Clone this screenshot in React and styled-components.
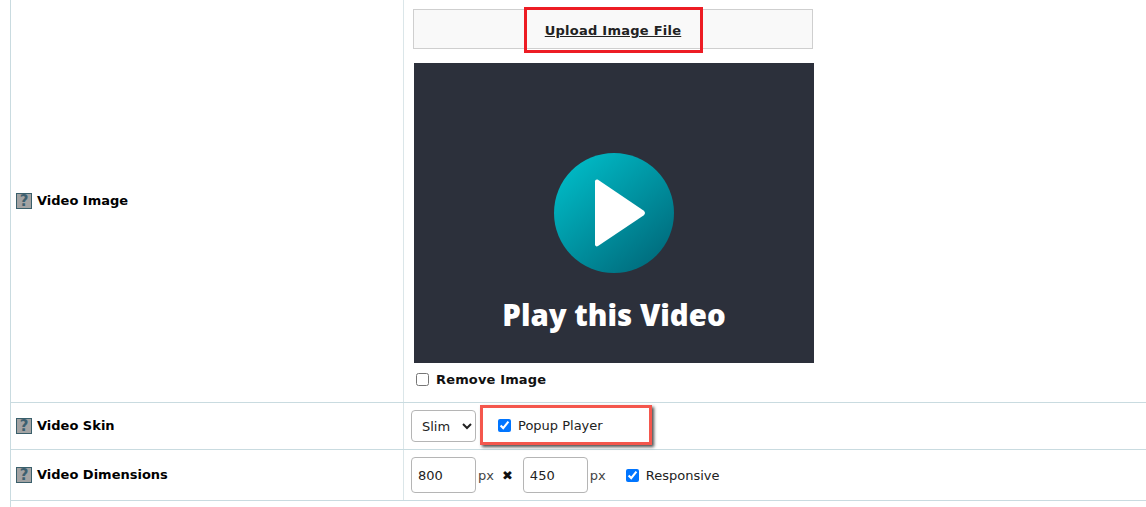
import React from "react";
import styled, { createGlobalStyle } from "styled-components";

const GlobalStyle = createGlobalStyle`
  html, body {
    margin: 0;
    padding: 0;
    background: #fff;
    overflow: hidden;
  }
  body {
    font-family: "DejaVu Sans", Verdana, sans-serif;
    font-size: 13px;
    color: #222;
  }
`;

const HelpIcon = () => (
  <HelpBox>?</HelpBox>
);

const PlayIcon = () => (
  <svg width="120" height="120" viewBox="0 0 120 120">
    <defs>
      <linearGradient id="playGrad" x1="0.15" y1="0.1" x2="0.85" y2="0.9">
        <stop offset="0" stopColor="#00b8c4" />
        <stop offset="1" stopColor="#006d7e" />
      </linearGradient>
    </defs>
    <circle cx="60" cy="60" r="60" fill="url(#playGrad)" />
    <path
      d="M41 28.5 C41 27 42.5 25.8 44 26.8 L89.5 57.5 C91.5 59 91.5 61 89.5 62.5 L44 93 C42.5 94 41 93 41 91.5 Z"
      fill="#fff"
    />
  </svg>
);

const App = () => {
  return (
    <>
      <GlobalStyle />
      <Table>
        <Row $height={403}>
          <Label>
            <HelpIcon />
            Video Image
          </Label>
          <Value>
            <ImageColumn>
              <UploadBox>
                <UploadLink href="#">Upload Image File</UploadLink>
                <RedMark />
              </UploadBox>
              <Poster>
                <PlayIcon />
                <PosterTitle>Play this Video</PosterTitle>
              </Poster>
              <RemoveRow>
                <Check type="checkbox" />
                Remove Image
              </RemoveRow>
            </ImageColumn>
          </Value>
        </Row>
        <Row $height={47}>
          <Label>
            <HelpIcon />
            Video Skin
          </Label>
          <Value>
            <Controls>
              <Select defaultValue="Slim">
                <option>Slim</option>
              </Select>
              <PopupBox>
                <Check type="checkbox" defaultChecked />
                <PlainLabel>Popup Player</PlainLabel>
              </PopupBox>
            </Controls>
          </Value>
        </Row>
        <Row $height={51}>
          <Label>
            <HelpIcon />
            Video Dimensions
          </Label>
          <Value>
            <Controls>
              <NumberInput defaultValue="800" />
              <Unit>px</Unit>
              <Times>✖</Times>
              <NumberInput defaultValue="450" />
              <Unit>px</Unit>
              <ResponsiveBox>
                <Check type="checkbox" defaultChecked />
                <PlainLabel>Responsive</PlainLabel>
              </ResponsiveBox>
            </Controls>
          </Value>
        </Row>
        <Row $height={10} />
      </Table>
    </>
  );
};

export default App;

const Table = styled.div`
  margin-left: 10px;
  border-left: 1px solid #c9dbe0;
  height: 507px;
  overflow: hidden;
`;
const Row = styled.div`
  display: grid;
  grid-template-columns: 393px 1fr;
  height: ${(p) => p.$height}px;
  box-sizing: border-box;
  border-bottom: 1px solid #c9dbe0;
`;
const Label = styled.div`
  display: flex;
  align-items: center;
  padding-left: 5px;
  padding-bottom: 2px;
  font-weight: 700;
  font-size: 13px;
  color: #000;
  border-right: 1px solid #dbe6e9;
`;
const HelpBox = styled.span`
  display: inline-flex;
  align-items: center;
  justify-content: center;
  width: 14px;
  height: 14px;
  margin-right: 5px;
  margin-top: 2px;
  background: #a3a3a3;
  border: 1px solid #3a5f6b;
  color: #3d6070;
  font-size: 15px;
  font-weight: 700;
`;
const Value = styled.div`
  display: flex;
  align-items: center;
  padding-left: 7px;
`;
const ImageColumn = styled.div`
  display: flex;
  flex-direction: column;
  align-self: flex-start;
  padding: 9px 0 0 2px;
`;
const UploadBox = styled.div`
  position: relative;
  box-sizing: border-box;
  width: 400px;
  height: 40px;
  display: flex;
  align-items: center;
  justify-content: center;
  padding-top: 2px;
  background: #f9f9f9;
  border: 1px solid #cfcfcf;
`;
const UploadLink = styled.a`
  font-size: 13px;
  font-weight: 700;
  letter-spacing: 0.25px;
  color: #222;
  text-decoration: underline;
`;
const RedMark = styled.span`
  position: absolute;
  left: 110px;
  top: -3px;
  width: 179px;
  height: 46px;
  box-sizing: border-box;
  border: 3px solid #ed1c24;
`;
const Poster = styled.div`
  width: 400px;
  height: 300px;
  margin: 14px 0 0 1px;
  padding-top: 90px;
  box-sizing: border-box;
  background: #2c303b;
  display: flex;
  flex-direction: column;
  align-items: center;
`;
const PosterTitle = styled.div`
  margin-top: 21px;
  font-family: "Open Sans", sans-serif;
  font-weight: 800;
  font-size: 29.4px;
  line-height: 42px;
  color: #fff;
`;
const RemoveRow = styled.label`
  display: flex;
  align-items: center;
  margin: 9px 0 0 3px;
  font-size: 13px;
  font-weight: 700;
  letter-spacing: 0.15px;
  color: #111;
`;
const Check = styled.input`
  width: 13px;
  height: 13px;
  margin: 0 7px 0 0;
  accent-color: #0075ff;
`;
const Controls = styled.div`
  display: flex;
  align-items: center;
`;
const Select = styled.select`
  width: 65px;
  height: 32px;
  box-sizing: border-box;
  padding-left: 6px;
  background: #fff;
  border: 1px solid #b5b5b5;
  border-radius: 4px;
  font-family: "DejaVu Sans", sans-serif;
  font-size: 13px;
  color: #222;
`;
const PopupBox = styled.div`
  display: flex;
  align-items: center;
  box-sizing: border-box;
  width: 172px;
  height: 40px;
  margin: 0 0 2px 4px;
  padding-left: 15px;
  border: 3px solid #f4574d;
  box-shadow: 2px 2px 3px rgba(0, 0, 0, 0.7);
`;
const PlainLabel = styled.span`
  font-size: 13px;
  color: #222;
`;
const NumberInput = styled.input`
  width: 65px;
  height: 36px;
  box-sizing: border-box;
  padding: 0 6px;
  background: #fff;
  border: 1px solid #b5b5b5;
  border-radius: 4px;
  font-family: "DejaVu Sans", sans-serif;
  font-size: 13px;
  color: #222;
`;
const Unit = styled.span`
  margin-left: 2px;
  font-size: 13px;
  color: #444;
`;
const Times = styled.span`
  margin: 0 10px 0 8px;
  font-size: 13px;
  color: #111;
`;
const ResponsiveBox = styled.div`
  display: flex;
  align-items: center;
  margin-left: 20px;
`;
